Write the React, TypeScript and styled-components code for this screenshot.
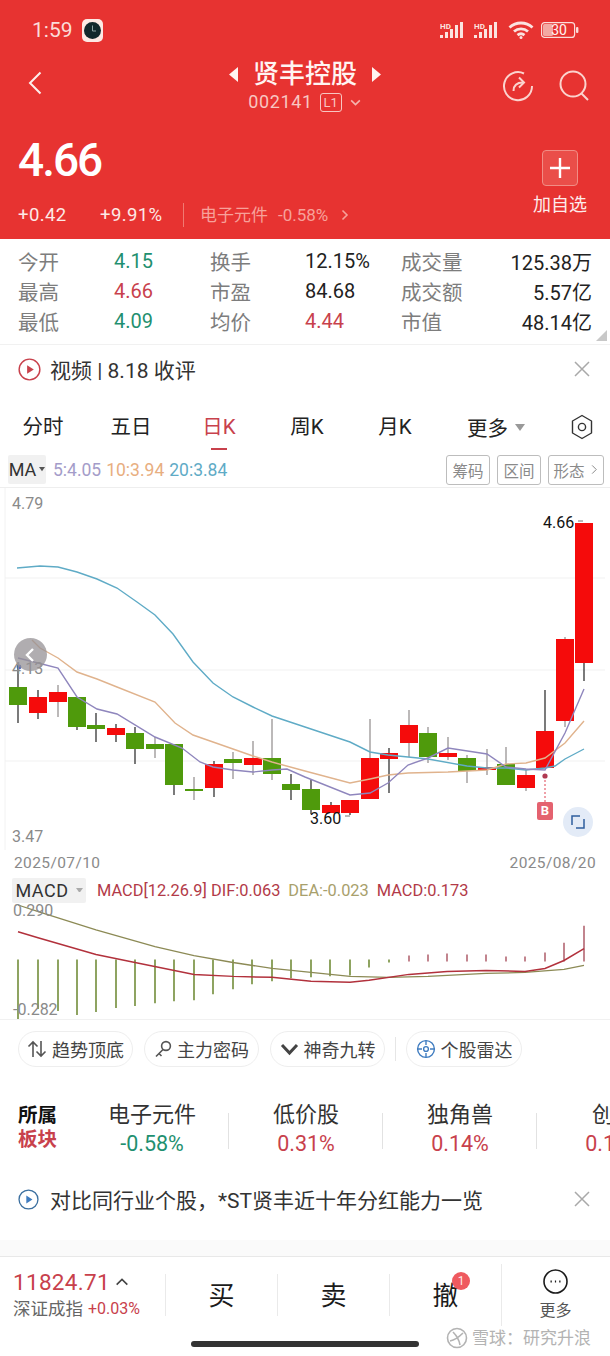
import React from "react";
import styled, { createGlobalStyle } from "styled-components";

const GlobalStyle = createGlobalStyle`
  html, body {
    margin: 0;
    padding: 0;
    background: #ffffff;
    font-family: Roboto, "Noto Sans CJK SC", sans-serif;
  }
  * {
    box-sizing: border-box;
  }
`;

const RED = "#c8414c";
const GREEN = "#1f9070";

const Page = styled.div`
  position: relative;
  width: 610px;
  height: 1356px;
  overflow: hidden;
  background: #ffffff;
  color: #222222;
`;

/* header */
const Header = styled.header`
  height: 239px;
  background: #e73331;
  color: #ffffff;
`;

const StatusBar = styled.div`
  height: 60px;
  padding: 0 31px 0 32px;
  display: flex;
  align-items: center;
  justify-content: space-between;
`;

const StatusLeft = styled.div`
  display: flex;
  align-items: center;
  gap: 9px;
  font-size: 21px;
  color: #fbdcd9;
`;

const StatusRight = styled.div`
  display: flex;
  align-items: center;
  gap: 7px;
`;

const NavRow = styled.div`
  height: 60px;
  padding: 0 22px;
  display: grid;
  grid-template-columns: 1fr auto 1fr;
  align-items: center;
`;

const BackSlot = styled.div`
  padding-left: 1px;
  margin-top: -10px;
`;

const NavCenter = styled.div`
  display: flex;
  flex-direction: column;
  align-items: center;
  margin-top: -8px;
`;

const TitleRow = styled.div`
  display: flex;
  align-items: center;
  gap: 15px;
  font-size: 26px;
  line-height: 32px;
  font-weight: 500;
  color: #fff4f2;
`;

const CodeRow = styled.div`
  display: flex;
  align-items: center;
  gap: 7px;
  font-size: 18px;
  line-height: 24px;
  letter-spacing: 0.6px;
  color: #f8c6c1;
`;

const LevelBox = styled.span`
  width: 22px;
  height: 19px;
  border: 1px solid #f8c6c1;
  border-radius: 3px;
  font-size: 13px;
  line-height: 17px;
  letter-spacing: 0;
  text-align: center;
`;

const NavIcons = styled.div`
  display: flex;
  justify-content: flex-end;
  gap: 24px;
  margin-top: -9px;
  margin-right: -2px;
`;

const PriceBlock = styled.div`
  display: flex;
  justify-content: space-between;
  padding: 12px 32px 0 18px;
`;

const BigPrice = styled.div`
  font-size: 46px;
  line-height: 56px;
  font-weight: 500;
  letter-spacing: -2px;
`;

const ChangeRow = styled.div`
  display: flex;
  align-items: center;
  margin-top: 15px;
  font-size: 18.5px;
  line-height: 24px;
  letter-spacing: 0.4px;
  color: #fde9e6;
`;

const ChangeValue = styled.span`
  width: 82px;
`;

const ChangePct = styled.span`
  width: 83px;
`;

const SectorLink = styled.span`
  display: flex;
  align-items: center;
  gap: 10px;
  height: 24px;
  padding-left: 16px;
  border-left: 1px solid #f07a72;
  font-size: 17px;
  letter-spacing: 0;
  color: #f7a19a;
`;

const SectorPct = styled.span`
  font-size: 17px;
`;

const AddColumn = styled.div`
  display: flex;
  flex-direction: column;
  align-items: center;
  gap: 6px;
  padding-top: 18px;
`;

const AddButton = styled.div`
  width: 36px;
  height: 36px;
  border: 1px solid #f18d85;
  border-radius: 4px;
  background: #ea4e49;
  display: flex;
  align-items: center;
  justify-content: center;
`;

const AddLabel = styled.span`
  font-size: 18px;
  line-height: 26px;
  margin: 0 -10px;
  white-space: nowrap;
  color: #fdeceb;
`;

/* quote grid */
const StatsGrid = styled.section`
  position: relative;
  height: 106px;
  padding: 7px 18px 0;
  border-bottom: 1px solid #f1f1f1;
  display: grid;
  grid-template-columns: 96px 96px 95px 96px 70px 1fr;
  grid-auto-rows: 30px;
  align-items: center;
`;

const StatLabel = styled.span`
  font-size: 20.5px;
  white-space: nowrap;
  color: #7d7d7d;
`;

const StatValue = styled.span<{ $color?: string; $right?: boolean }>`
  font-size: 20px;
  white-space: nowrap;
  color: ${(p) => p.$color || "#222222"};
  text-align: ${(p) => (p.$right ? "right" : "left")};
`;

const CornerMark = styled.span`
  position: absolute;
  right: 3px;
  bottom: 3px;
  width: 0;
  height: 0;
  border-left: 11px solid transparent;
  border-bottom: 11px solid #c8c8c8;
`;

/* notice rows */
const NoticeRow = styled.div<{ $height: number; $gap: number }>`
  height: ${(p) => p.$height}px;
  padding: 0 20px 0 18px;
  display: flex;
  align-items: center;
  gap: ${(p) => p.$gap}px;
  font-size: 21px;
  color: #333333;
`;

const NoticeText = styled.span`
  flex: 1;
  white-space: nowrap;
`;

/* period tabs */
const TabsRow = styled.nav`
  height: 68px;
  padding: 0 17px 0 0;
  margin-left: -1px;
  display: flex;
  align-items: center;
`;

const Tab = styled.div<{ $active?: boolean }>`
  position: relative;
  width: 88px;
  text-align: center;
  font-size: 20.5px;
  line-height: 28px;
  color: ${(p) => (p.$active ? RED : "#222222")};
  ${(p) =>
    p.$active &&
    `&::after {
      content: "";
      position: absolute;
      left: 36px;
      bottom: -9px;
      width: 16px;
      height: 2px;
      background: ${RED};
    }`}
`;

const MoreTab = styled.div`
  display: flex;
  align-items: center;
  gap: 7px;
  margin-left: 28px;
  font-size: 20.5px;
  color: #222222;
`;

const TabSpacer = styled.div`
  flex: 1;
`;

/* MA row */
const IndicatorRow = styled.div`
  height: 33px;
  padding: 0 6px 0 8px;
  margin-top: -8px;
  display: flex;
  align-items: center;
`;

const IndicatorChip = styled.div<{ $width: number }>`
  width: ${(p) => p.$width}px;
  height: 29px;
  background: #f1f1f1;
  border-radius: 2px;
  display: flex;
  align-items: center;
  justify-content: center;
  gap: 3px;
  font-size: 18px;
  color: #333333;
`;

const IndicatorValue = styled.span<{ $color: string }>`
  color: ${(p) => p.$color};
  font-size: 17.5px;
  margin-right: 5px;
`;

const IndicatorValues = styled.div`
  flex: 1;
  padding-left: 7px;
`;

const ToolButton = styled.div<{ $width: number }>`
  width: ${(p) => p.$width}px;
  height: 30px;
  margin-left: 7px;
  border: 1px solid #bdbdbd;
  border-radius: 3px;
  display: flex;
  align-items: center;
  justify-content: center;
  gap: 3px;
  font-size: 15.5px;
  color: #8a8a8a;
`;

/* charts */
const KChart = styled.div`
  position: relative;
  height: 363px;
  margin-top: 1px;
  border-top: 1px solid #eeeeee;
`;

const ChartSvg = styled.svg`
  display: block;
  width: 610px;
  height: 100%;
`;

const AxisLabel = styled.span<{ $left: number; $top: number; $dark?: boolean }>`
  position: absolute;
  left: ${(p) => p.$left}px;
  top: ${(p) => p.$top}px;
  font-size: 16px;
  line-height: 18px;
  color: ${(p) => (p.$dark ? "#111111" : "#8a8a8a")};
`;

const CollapseButton = styled.div`
  position: absolute;
  left: 14px;
  top: 150px;
  width: 33px;
  height: 33px;
  border-radius: 50%;
  background: rgba(150, 145, 150, 0.75);
  display: flex;
  align-items: center;
  justify-content: center;
`;

const BuyMark = styled.span`
  position: absolute;
  left: 537px;
  top: 314px;
  width: 16px;
  height: 18px;
  border-radius: 2px;
  background: #e4626f;
  color: #ffffff;
  font-size: 13px;
  line-height: 18px;
  font-weight: 700;
  text-align: center;
`;

const ExpandButton = styled.div`
  position: absolute;
  left: 563px;
  top: 319px;
  width: 30px;
  height: 30px;
  border-radius: 50%;
  background: #e3ebf7;
  display: flex;
  align-items: center;
  justify-content: center;
`;

const DateRow = styled.div`
  height: 24px;
  padding: 2px 14px 0;
  display: flex;
  align-items: center;
  justify-content: space-between;
  font-size: 15.5px;
  letter-spacing: 0.4px;
  color: #8a8a8a;
`;

const MacdRow = styled.div`
  height: 28px;
  margin-top: 2px;
  padding: 0 12px;
  display: flex;
  align-items: center;
`;

const MacdChip = styled(IndicatorChip)`
  height: 25px;
  gap: 7px;
  letter-spacing: 0.5px;
`;

const MacdValues = styled.div`
  padding-left: 11px;
`;

const MacdValue = styled.span<{ $color: string }>`
  color: ${(p) => p.$color};
  font-size: 16.4px;
  margin-right: 8px;
`;

const MacdChart = styled.div`
  position: relative;
  height: 116px;
  border-bottom: 1px solid #f1f1f1;
`;

/* shortcuts */
const PillRow = styled.div`
  height: 59px;
  padding: 11px 18px 0;
  display: flex;
  align-items: flex-start;
  gap: 11px;
`;

const Pill = styled.div<{ $width: number }>`
  width: ${(p) => p.$width}px;
  height: 36px;
  border: 1px solid #eeeeee;
  border-radius: 18px;
  display: flex;
  align-items: center;
  justify-content: center;
  gap: 5px;
  font-size: 18px;
  color: #444444;
`;

const PillDivider = styled.span`
  width: 1px;
  height: 24px;
  margin: 6px -1px 0;
  background: #e6e6e6;
`;

/* sector strip */
const SectorStrip = styled.section`
  height: 100px;
  padding-bottom: 2px;
  display: flex;
  align-items: center;
  background: #ffffff;
  overflow: hidden;
`;

const SectorTitle = styled.div`
  width: 75px;
  flex-shrink: 0;
  padding-left: 18px;
  font-size: 19.5px;
  line-height: 24px;
  font-weight: 700;
  color: #111111;
`;

const SectorTitleRed = styled.div`
  color: ${RED};
`;

const SectorItem = styled.div<{ $divider?: boolean }>`
  position: relative;
  width: 154px;
  flex-shrink: 0;
  text-align: center;
  ${(p) =>
    p.$divider &&
    `&::after {
      content: "";
      position: absolute;
      right: 0;
      top: 13px;
      width: 1px;
      height: 36px;
      background: #e2e2e2;
    }`}
`;

const SectorName = styled.div`
  font-size: 22px;
  line-height: 30px;
  white-space: nowrap;
  color: #333333;
`;

const SectorChange = styled.div<{ $color: string }>`
  font-size: 21.5px;
  line-height: 27px;
  white-space: nowrap;
  color: ${(p) => p.$color};
`;

const Band = styled.div`
  height: 17px;
  margin-top: 21px;
  background: #fafafa;
  border-bottom: 1px solid #e8e8e8;
`;

/* footer */
const Footer = styled.footer`
  height: 76px;
  display: flex;
  align-items: center;
`;

const IndexBlock = styled.div`
  width: 165px;
  padding-left: 13px;
`;

const IndexValue = styled.div`
  display: flex;
  align-items: center;
  gap: 4px;
  font-size: 22.5px;
  line-height: 28px;
  letter-spacing: 0.3px;
  color: ${RED};
`;

const IndexName = styled.div`
  display: flex;
  align-items: center;
  gap: 5px;
  font-size: 17.5px;
  line-height: 26px;
  color: #666666;
`;

const IndexPct = styled.span`
  font-size: 16px;
  color: ${RED};
`;

const TradeButton = styled.div`
  position: relative;
  width: 112px;
  height: 42px;
  padding-bottom: 4px;
  border-left: 1px solid #eaeaea;
  display: flex;
  align-items: center;
  justify-content: center;
  font-size: 26px;
  color: #1b1b1b;
`;

const Badge = styled.span`
  position: absolute;
  left: 62px;
  top: -2px;
  width: 18px;
  height: 18px;
  border-radius: 50%;
  background: #ef5a5f;
  color: #ffe9e9;
  font-size: 12px;
  line-height: 18px;
  text-align: center;
`;

const MoreButton = styled.div`
  flex: 1;
  height: 62px;
  border-left: 1px solid #eaeaea;
  display: flex;
  flex-direction: column;
  align-items: center;
  gap: 7px;
  padding: 5px 1px 0 0;
  font-size: 16px;
  line-height: 20px;
  color: #555555;
`;

const HomeIndicator = styled.div`
  position: absolute;
  left: 191px;
  top: 1341px;
  width: 228px;
  height: 6px;
  border-radius: 3px;
  background: #333333;
`;

const Watermark = styled.div`
  position: absolute;
  left: 446px;
  top: 1325px;
  display: flex;
  align-items: center;
  gap: 4px;
  font-size: 17px;
  line-height: 26px;
  color: #b3b3b3;
  text-shadow: 0 0 1px #ffffff;
`;

/* icons */
const SignalIcon = () => (
  <svg width="27" height="16" viewBox="0 0 27 16">
    <text x="0" y="7" fontSize="8" fontWeight="700" fontFamily="Roboto, sans-serif" fill="#fbe3e0">
      HD
    </text>
    <g fill="#fbe3e0">
      <rect x="0" y="13" width="3" height="3" />
      <rect x="5" y="10" width="3" height="6" />
      <rect x="10" y="7" width="3" height="9" />
      <rect x="15" y="3" width="3" height="13" />
      <rect x="20" y="0" width="3" height="16" />
    </g>
  </svg>
);

const WifiIcon = () => (
  <svg width="26" height="18" viewBox="0 0 26 18" fill="none" stroke="#fbe3e0" strokeWidth="2.8">
    <path d="M1.5 6.5C8 0.5 18 0.5 24.5 6.5" />
    <path d="M6 10.5C10 7 16 7 20 10.5" />
    <path d="M9.5 14.2C11.5 12.6 14.5 12.6 16.5 14.2" />
    <circle cx="13" cy="16.4" r="1.5" fill="#fbe3e0" stroke="none" />
  </svg>
);

const BatteryIcon = () => (
  <svg width="38" height="16" viewBox="0 0 38 16">
    <rect x="0.6" y="0.6" width="33" height="14.8" rx="3" fill="none" stroke="#fbdcd9" strokeWidth="1.2" />
    <rect x="2" y="2" width="10" height="12" rx="1.5" fill="#f3a9a3" />
    <rect x="35" y="5" width="2.4" height="6" rx="1" fill="#fbdcd9" />
    <text x="18" y="12.7" fontSize="14" textAnchor="middle" fontFamily="Roboto, sans-serif" fill="#fff3f1">
      30
    </text>
  </svg>
);

const ClockBadge = () => (
  <svg width="21" height="23" viewBox="0 0 21 23">
    <rect x="0" y="0" width="21" height="23" rx="5" fill="#fde9e4" />
    <circle cx="10.5" cy="11.5" r="8.5" fill="#12282c" />
    <path d="M10.5 6.5V12H14" stroke="#8ea4a4" strokeWidth="1" fill="none" />
  </svg>
);

const Chevron = ({ dir, size, color, width = 1.6 }: { dir: "l" | "r" | "d" | "u"; size: number; color: string; width?: number }) => {
  const d = { l: "M15 3L6 12L15 21", r: "M9 3L18 12L9 21", d: "M4 8L12 16L20 8", u: "M4 16L12 8L20 16" }[dir];
  return (
    <svg width={size} height={size} viewBox="0 0 24 24" fill="none" stroke={color} strokeWidth={(width * 24) / size}>
      <path d={d} />
    </svg>
  );
};

const ShareIcon = () => (
  <svg width="32" height="32" viewBox="0 0 32 32" fill="none" stroke="#fbd3ce" strokeWidth="2">
    <path d="M22 3.5A14 14 0 1 0 30 16" />
    <path d="M11.5 21C11.5 15.5 14.5 12.5 21 12.5" />
    <path d="M17 7.5L22 12.5L17 17.5" />
  </svg>
);

const SearchIcon = () => (
  <svg width="32" height="32" viewBox="0 0 32 32" fill="none" stroke="#fbd3ce" strokeWidth="2">
    <circle cx="15" cy="14" r="12.5" />
    <path d="M23.5 23.5L30 30" />
  </svg>
);

const CloseIcon = () => (
  <svg width="16" height="16" viewBox="0 0 16 16" stroke="#a9a9a9" strokeWidth="1.5">
    <path d="M1 1L15 15M15 1L1 15" />
  </svg>
);

const Triangle = ({ dir }: { dir: "l" | "r" }) => (
  <svg width="10" height="15" viewBox="0 0 10 15" fill="#fff4f2">
    <path d={dir === "l" ? "M10 0V15L1 7.5Z" : "M0 0V15L9 7.5Z"} />
  </svg>
);

const SmallCaret = ({ color, w = 10 }: { color: string; w?: number }) => (
  <svg width={w} height={w * 0.7} viewBox="0 0 10 7" fill={color}>
    <path d="M0 0H10L5 7Z" />
  </svg>
);

const HexIcon = () => (
  <svg width="22" height="26" viewBox="0 0 22 26" fill="none" stroke="#333333" strokeWidth="1.4">
    <path d="M11 1.5L20.5 7V19L11 24.5L1.5 19V7Z" strokeLinejoin="round" />
    <circle cx="11" cy="13" r="3.6" />
  </svg>
);

const PlayRing = ({ size, color, fill }: { size: number; color: string; fill: string }) => (
  <svg width={size} height={size} viewBox="0 0 24 24" fill="none">
    <circle cx="12" cy="12" r="10.8" stroke={color} strokeWidth="1.5" />
    <path d="M9.5 7.5L16.5 12L9.5 16.5Z" fill={fill} />
  </svg>
);

/* x, bodyTop, bodyBottom, wickTop, wickBottom, up, soft wick */
type Candle = [number, number, number, number, number, boolean, boolean?];

const CANDLES: Candle[] = [
  [18, 687, 705, 668, 723, false],
  [38, 697, 713, 690, 719, true],
  [58, 692, 702, 685, 717, true, true],
  [77, 697, 727, 697, 730, false],
  [96, 725, 729, 713, 742, false],
  [116, 728, 735, 724, 742, true],
  [135, 733, 749, 727, 764, false],
  [155, 744, 749, 737, 758, false, true],
  [174, 744, 785, 744, 795, false],
  [194, 789, 790, 777, 800, false, true],
  [214, 764, 788, 761, 797, true],
  [233, 759, 763, 752, 779, false, true],
  [253, 758, 765, 741, 775, true, true],
  [272, 758, 774, 719, 780, false, true],
  [291, 784, 790, 774, 800, false],
  [311, 789, 810, 780, 814, false],
  [331, 805, 813, 802, 813, true],
  [350, 800, 813, 800, 815, true],
  [370, 758, 799, 719, 799, true, true],
  [389, 753, 759, 748, 793, true],
  [409, 725, 743, 710, 757, true, true],
  [428, 733, 757, 727, 763, false, true],
  [448, 753, 757, 737, 760, true, true],
  [467, 758, 771, 755, 783, false, true],
  [487, 767, 770, 749, 775, true, true],
  [506, 764, 785, 747, 785, false, true],
  [526, 775, 788, 770, 791, true, true],
  [545, 731, 768, 690, 768, true],
  [565, 639, 721, 637, 727, true, true],
  [584, 523, 663, 523, 681, true],
];

const MA20 = "17,568 40,566 58,567 77,572 97,579 117,588 137,602 155,615 173,634 193,662 213,683 233,697 253,707 272,716 305,727 350,742 370,752 388,755 428,759 467,766 487,768 506,768 526,770 545,768 555,766 565,759 584,749";
const MA10 = "32,640 40,648 58,658 77,672 97,679 117,687 155,702 175,723 193,735 213,742 233,749 253,756 272,762 305,771 350,783 370,779 388,775 408,773 448,772 487,770 506,764 526,763 545,758 565,743 584,721";
const MA5 = "18,658 38,663 58,668 77,697 97,709 117,714 155,737 182,748 200,762 213,767 233,770 253,772 272,770 287,769 305,777 350,795 370,793 388,783 408,765 428,758 448,748 487,754 506,767 526,769 545,770 565,733 584,689";

/* x, top, bottom */
const MACD_BARS: [number, number, number][] = [
  [18, 960, 1020], [38, 960, 1010], [58, 960, 1012], [77, 960, 1016], [96, 960, 1013],
  [116, 960, 1009], [135, 960, 1007], [155, 960, 1004], [174, 960, 1002], [194, 960, 1001],
  [213, 960, 995], [233, 960, 990], [252, 960, 985], [272, 960, 982], [291, 960, 979],
  [311, 960, 978], [330, 960, 977], [350, 960, 976], [369, 960, 968], [389, 960, 963],
  [409, 956, 962], [428, 955, 962], [447, 954, 962], [467, 955, 962], [486, 955, 962],
  [506, 957, 962], [525, 957, 962], [545, 953, 962], [564, 943, 962], [584, 926, 962],
];

const DEA = "18,905 39,912 96,930 155,947 194,956 233,963 272,969 311,973 350,977 389,978 428,977 486,974 525,973 564,970 584,966";
const DIF = "18,932 38,938 96,955 135,963 194,975 233,977 272,978 311,982 350,983 369,981 409,975 447,972 486,971 525,972 545,969 564,961 584,949";

const STATS: { label: string; value: string; color?: string; right?: boolean }[] = [
  { label: "今开", value: "4.15", color: GREEN },
  { label: "换手", value: "12.15%" },
  { label: "成交量", value: "125.38万", right: true },
  { label: "最高", value: "4.66", color: RED },
  { label: "市盈", value: "84.68" },
  { label: "成交额", value: "5.57亿", right: true },
  { label: "最低", value: "4.09", color: GREEN },
  { label: "均价", value: "4.44", color: RED },
  { label: "市值", value: "48.14亿", right: true },
];

const SECTORS = [
  { name: "电子元件", change: "-0.58%", color: GREEN },
  { name: "低价股", change: "0.31%", color: RED },
  { name: "独角兽", change: "0.14%", color: RED },
  { name: "创投", change: "0.11%", color: RED },
];

const App: React.FC = () => {
  return (
    <Page>
      <GlobalStyle />
      <Header>
        <StatusBar>
          <StatusLeft>
            1:59
            <ClockBadge />
          </StatusLeft>
          <StatusRight>
            <SignalIcon />
            <SignalIcon />
            <WifiIcon />
            <BatteryIcon />
          </StatusRight>
        </StatusBar>
        <NavRow>
          <BackSlot>
            <Chevron dir="l" size={28} color="#fdeeec" width={2} />
          </BackSlot>
          <NavCenter>
            <TitleRow>
              <Triangle dir="l" />
              贤丰控股
              <Triangle dir="r" />
            </TitleRow>
            <CodeRow>
              002141
              <LevelBox>L1</LevelBox>
              <Chevron dir="d" size={13} color="#f5b4ae" />
            </CodeRow>
          </NavCenter>
          <NavIcons>
            <ShareIcon />
            <SearchIcon />
          </NavIcons>
        </NavRow>
        <PriceBlock>
          <div>
            <BigPrice>4.66</BigPrice>
            <ChangeRow>
              <ChangeValue>+0.42</ChangeValue>
              <ChangePct>+9.91%</ChangePct>
              <SectorLink>
                电子元件
                <SectorPct>-0.58%</SectorPct>
                <Chevron dir="r" size={12} color="#f7a19a" />
              </SectorLink>
            </ChangeRow>
          </div>
          <AddColumn>
            <AddButton>
              <svg width="20" height="20" viewBox="0 0 20 20" stroke="#ffffff" strokeWidth="2.4">
                <path d="M10 0V20M0 10H20" />
              </svg>
            </AddButton>
            <AddLabel>加自选</AddLabel>
          </AddColumn>
        </PriceBlock>
      </Header>

      <StatsGrid>
        {STATS.map((s) => (
          <React.Fragment key={s.label}>
            <StatLabel>{s.label}</StatLabel>
            <StatValue $color={s.color} $right={s.right}>
              {s.value}
            </StatValue>
          </React.Fragment>
        ))}
        <CornerMark />
      </StatsGrid>

      <NoticeRow $height={48} $gap={9}>
        <PlayRing size={23} color="#c8414c" fill="#c8414c" />
        <NoticeText>视频 | 8.18 收评</NoticeText>
        <CloseIcon />
      </NoticeRow>

      <TabsRow>
        <Tab>分时</Tab>
        <Tab>五日</Tab>
        <Tab $active>日K</Tab>
        <Tab>周K</Tab>
        <Tab>月K</Tab>
        <MoreTab>
          更多
          <SmallCaret color="#999999" />
        </MoreTab>
        <TabSpacer />
        <HexIcon />
      </TabsRow>

      <IndicatorRow>
        <IndicatorChip $width={38}>
          MA
          <SmallCaret color="#555555" w={6} />
        </IndicatorChip>
        <IndicatorValues>
          <IndicatorValue $color="#a49cc9">5:4.05</IndicatorValue>
          <IndicatorValue $color="#e8ae80">10:3.94</IndicatorValue>
          <IndicatorValue $color="#5fabc6">20:3.84</IndicatorValue>
        </IndicatorValues>
        <ToolButton $width={44}>筹码</ToolButton>
        <ToolButton $width={44}>区间</ToolButton>
        <ToolButton $width={56}>
          形态
          <Chevron dir="r" size={11} color="#8a8a8a" width={1} />
        </ToolButton>
      </IndicatorRow>

      <KChart>
        <ChartSvg viewBox="0 488 610 362" preserveAspectRatio="none">
          <path d="M5 488V850" stroke="#f2f2f2" />
          <path d="M5 578H605M5 670H605M5 761H605" stroke="#f1f1f1" />
          {CANDLES.map(([x, top, bottom, wickTop, wickBottom, up, soft]) => (
            <g key={x}>
              <path d={`M${x} ${wickTop}V${wickBottom}`} stroke={soft ? "#8f8a8a" : "#222222"} strokeWidth="1.2" />
              <rect x={x - 9} y={top} width="18" height={Math.max(bottom - top, 2)} fill={up ? "#f50b0b" : "#4f9a0c"} />
            </g>
          ))}
          <polyline points={MA20} fill="none" stroke="#5fabc6" strokeWidth="1.4" />
          <polyline points={MA10} fill="none" stroke="#e0b38d" strokeWidth="1.4" />
          <polyline points={MA5} fill="none" stroke="#8f86bd" strokeWidth="1.4" />
          <path d="M545 776V803" stroke="#e4626f" strokeWidth="1.2" strokeDasharray="2 2" />
          <circle cx="545" cy="776" r="2.6" fill="#b03a52" />
          <circle cx="19" cy="667" r="2.4" fill="#3f5fc0" />
          <path d="M345 816H350M578 521H583" stroke="#777777" />
        </ChartSvg>
        <AxisLabel $left={12} $top={7}>4.79</AxisLabel>
        <AxisLabel $left={12} $top={172}>4.13</AxisLabel>
        <AxisLabel $left={12} $top={340}>3.47</AxisLabel>
        <AxisLabel $left={543} $top={26} $dark>4.66</AxisLabel>
        <AxisLabel $left={310} $top={322} $dark>3.60</AxisLabel>
        <CollapseButton>
          <Chevron dir="l" size={16} color="#ffffff" width={2.4} />
        </CollapseButton>
        <BuyMark>B</BuyMark>
        <ExpandButton>
          <svg width="14" height="14" viewBox="0 0 14 14" fill="none" stroke="#2f5f9e" strokeWidth="1.5">
            <path d="M1 10V1H9M13 4V13H5" />
          </svg>
        </ExpandButton>
      </KChart>

      <DateRow>
        <span>2025/07/10</span>
        <span>2025/08/20</span>
      </DateRow>

      <MacdRow>
        <MacdChip $width={74}>
          MACD
          <SmallCaret color="#aaaaaa" w={7} />
        </MacdChip>
        <MacdValues>
          <MacdValue $color="#b23a48">MACD[12.26.9] DIF:0.063</MacdValue>
          <MacdValue $color="#a8a06c">DEA:-0.023</MacdValue>
          <MacdValue $color="#b23a48">MACD:0.173</MacdValue>
        </MacdValues>
      </MacdRow>

      <MacdChart>
        <ChartSvg viewBox="0 904 610 116" preserveAspectRatio="none">
          {MACD_BARS.map(([x, top, bottom]) => (
            <path key={x} d={`M${x} ${top}V${bottom}`} stroke={x > 400 ? "#a8515e" : "#5f7d1e"} strokeWidth="1.4" />
          ))}
          <polyline points={DEA} fill="none" stroke="#8c8a55" strokeWidth="1.3" />
          <polyline points={DIF} fill="none" stroke="#b2313c" strokeWidth="1.5" />
        </ChartSvg>
        <AxisLabel $left={13} $top={-2}>0.290</AxisLabel>
        <AxisLabel $left={13} $top={97}>-0.282</AxisLabel>
      </MacdChart>

      <PillRow>
        <Pill $width={115}>
          <svg width="20" height="18" viewBox="0 0 20 18" fill="none" stroke="#555555" strokeWidth="1.6">
            <path d="M6 17V2M1.5 6.5L6 2L10.5 6.5M14 1V16M9.5 11.5L14 16L18.5 11.5" />
          </svg>
          趋势顶底
        </Pill>
        <Pill $width={115}>
          <svg width="18" height="18" viewBox="0 0 18 18" fill="none" stroke="#555555" strokeWidth="1.6">
            <circle cx="12" cy="6" r="4.4" />
            <path d="M9 9.5L2 16.5M5 13.5L7.5 16" />
          </svg>
          主力密码
        </Pill>
        <Pill $width={115}>
          <svg width="19" height="14" viewBox="0 0 19 14" fill="none" stroke="#444444" strokeWidth="3">
            <path d="M2 3L9.5 11L17 3" />
          </svg>
          神奇九转
        </Pill>
        <PillDivider />
        <Pill $width={116}>
          <svg width="20" height="20" viewBox="0 0 20 20" fill="none" stroke="#3f7cc0" strokeWidth="1.4">
            <circle cx="10" cy="10" r="8.4" />
            <circle cx="10" cy="10" r="2.4" />
            <path d="M10 1.5V6M10 14V18.5M1.5 10H6M14 10H18.5" />
          </svg>
          个股雷达
        </Pill>
      </PillRow>

      <SectorStrip>
        <SectorTitle>
          所属
          <SectorTitleRed>板块</SectorTitleRed>
        </SectorTitle>
        {SECTORS.map((s, i) => (
          <SectorItem key={s.name} $divider={i < SECTORS.length - 1}>
            <SectorName>{s.name}</SectorName>
            <SectorChange $color={s.color}>{s.change}</SectorChange>
          </SectorItem>
        ))}
      </SectorStrip>

      <NoticeRow $height={40} $gap={11}>
        <PlayRing size={21} color="#3b6f9f" fill="#3f7cc0" />
        <NoticeText>对比同行业个股，*ST贤丰近十年分红能力一览</NoticeText>
        <CloseIcon />
      </NoticeRow>

      <Band />

      <Footer>
        <IndexBlock>
          <IndexValue>
            11824.71
            <Chevron dir="u" size={16} color="#444444" />
          </IndexValue>
          <IndexName>
            深证成指
            <IndexPct>+0.03%</IndexPct>
          </IndexName>
        </IndexBlock>
        <TradeButton>买</TradeButton>
        <TradeButton>卖</TradeButton>
        <TradeButton>
          撤
          <Badge>1</Badge>
        </TradeButton>
        <MoreButton>
          <svg width="25" height="25" viewBox="0 0 25 25" fill="none" stroke="#1b1b1b" strokeWidth="1.6">
            <circle cx="12.5" cy="12.5" r="11.5" />
            <path d="M7.5 12.5H8.8M11.9 12.5H13.1M16.2 12.5H17.5" strokeWidth="2" />
          </svg>
          更多
        </MoreButton>
      </Footer>

      <HomeIndicator />
      <Watermark>
        <svg width="22" height="22" viewBox="0 0 22 22" fill="none" stroke="#b3b3b3" strokeWidth="1.6">
          <circle cx="11" cy="11" r="9.5" />
          <path d="M7 5C10 8 13 12 14 18M17 6C13 10 9 13 4 14" />
        </svg>
        雪球：研究升浪
      </Watermark>
    </Page>
  );
};

export default App;
